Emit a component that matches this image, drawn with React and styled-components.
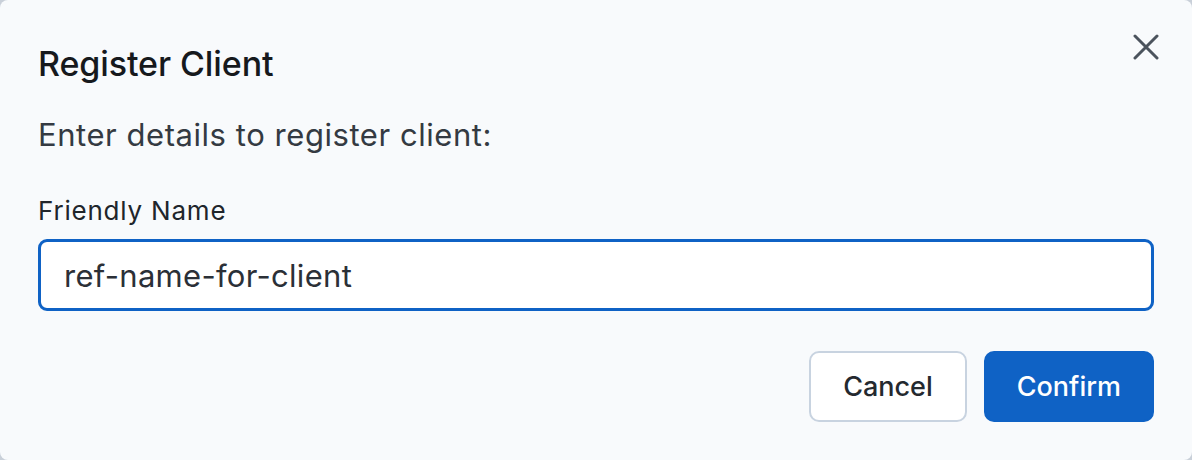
import React from 'react'
import { styled, createGlobalStyle } from 'styled-components'

const GlobalStyle = createGlobalStyle`
  html, body {
    margin: 0;
    padding: 0;
    background: #c9d0d9;
  }
  * { box-sizing: border-box; }
`

const Dialog = styled.div`
  width: 1192px;
  height: 460px;
  background: #f8fafc;
  border-radius: 8px;
  padding: 44px 38px 0;
  font-family: Inter, "Noto Sans", sans-serif;
  display: flex;
  flex-direction: column;
  position: relative;
`

const Title = styled.h2`
  margin: 0;
  font-size: 34px;
  line-height: 40px;
  font-weight: 500;
  color: #16191d;
  letter-spacing: -0.1px;
`

const CloseButton = styled.button`
  position: absolute;
  top: 30px;
  right: 29px;
  width: 34px;
  height: 34px;
  border: none;
  background: transparent;
  padding: 0;
  display: flex;
  align-items: center;
  justify-content: center;
  cursor: pointer;
`

const Description = styled.p`
  margin: 33px 0 0;
  font-size: 31px;
  line-height: 36px;
  color: #343a42;
  letter-spacing: 0.55px;
`

const Label = styled.label`
  display: block;
  margin-top: 43px;
  font-size: 26px;
  line-height: 30px;
  color: #20252b;
  letter-spacing: 0.8px;
`

const Input = styled.input`
  margin-top: 13px;
  width: 100%;
  height: 72px;
  border: 3px solid #0f62c5;
  border-radius: 9px;
  background: #fff;
  padding: 0 23px;
  font-family: inherit;
  font-size: 31px;
  letter-spacing: 0.3px;
  color: #2b3037;
  outline: none;
  caret-color: #111;
`

const Actions = styled.div`
  display: flex;
  justify-content: flex-end;
  gap: 17px;
  margin-top: 40px;
`

const Button = styled.button`
  height: 71px;
  padding: 0 ${p => p.$pad}px;
  border-radius: 10px;
  font-family: inherit;
  font-size: 27px;
  font-weight: 500;
  cursor: pointer;
  border: 2px solid ${p => p.$primary ? '#0f62c5' : '#c8d3e0'};
  background: ${p => p.$primary ? '#0f62c5' : '#ffffff'};
  color: ${p => p.$primary ? '#ffffff' : '#24292f'};
`

const App = () => {
  return (
    <>
      <GlobalStyle />
      <Dialog>
        <Title>Register Client</Title>
        <CloseButton aria-label="Close">
          <svg width="26" height="26" viewBox="0 0 26 26" fill="none" stroke="#4b535d" strokeWidth="3" strokeLinecap="round">
            <path d="M2 2 L24 24 M24 2 L2 24" />
          </svg>
        </CloseButton>
        <Description>Enter details to register client:</Description>
        <Label>Friendly Name</Label>
        <Input defaultValue="ref-name-for-client" autoFocus />
        <Actions>
          <Button $pad={32}>Cancel</Button>
          <Button $primary $pad={31}>Confirm</Button>
        </Actions>
      </Dialog>
    </>
  )
}

export default App
